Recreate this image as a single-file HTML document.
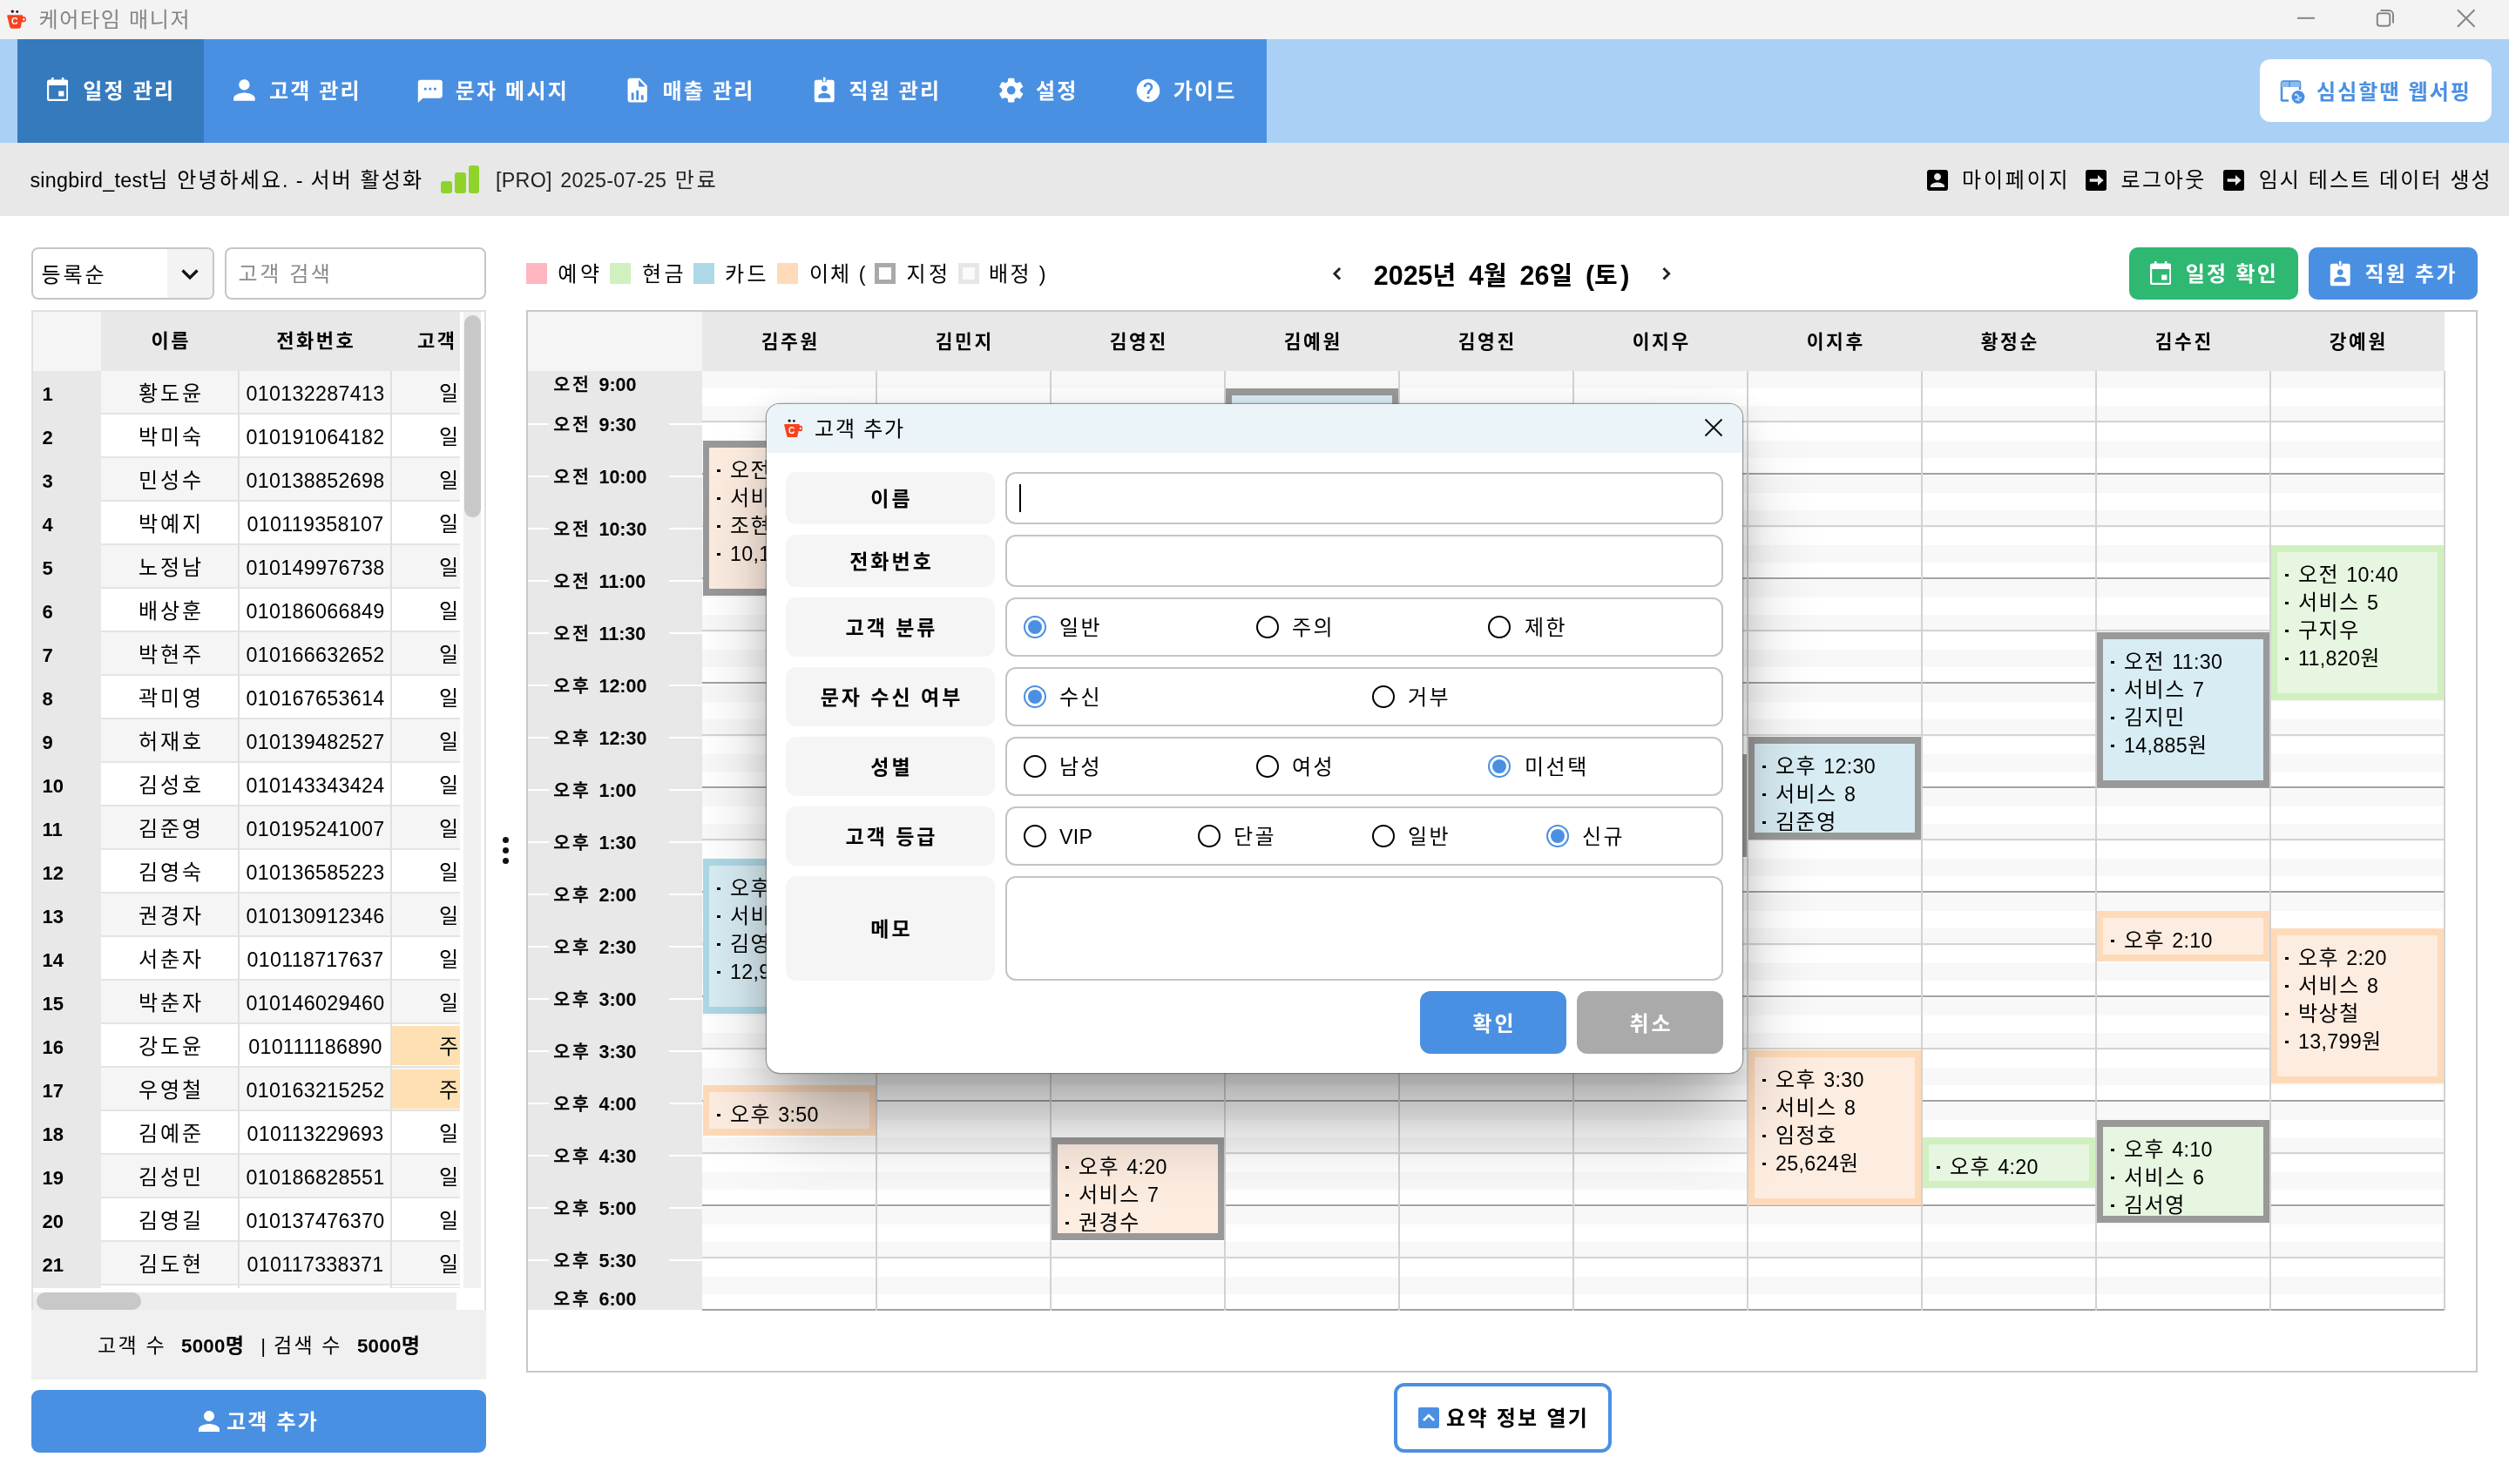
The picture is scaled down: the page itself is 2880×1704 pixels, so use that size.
<!DOCTYPE html>
<html lang="ko"><head><meta charset="utf-8"><title>케어타임 매니저</title>
<style>
html,body{margin:0;padding:0}
body{width:2880px;height:1704px;position:relative;overflow:hidden;background:#fff;font-family:"Liberation Sans","Noto Sans CJK KR","NanumGothic",sans-serif;color:#000}
div{box-sizing:border-box}
.l{font-size:.97em;letter-spacing:.3px}
.lb{font-size:1.05em;letter-spacing:0;font-weight:700;-webkit-text-stroke:0}

.ev{position:absolute;border-style:solid;border-width:8px 7px;font-size:24px;letter-spacing:1.5px;line-height:32px;padding:10px 0 0 9px;white-space:nowrap;overflow:hidden}
.d{display:inline-block;width:3.5px;height:3.5px;background:#000;vertical-align:middle;margin:0 11.5px 2px 0}
.rd{position:absolute;width:26px;height:26px;border-radius:50%;border:2.5px solid #000;background:#fff}
.rd.on{border:2px solid #4a90e2}
.rd.on::after{content:"";position:absolute;left:3px;top:3px;width:16px;height:16px;border-radius:50%;background:#4a90e2}
.lab{position:absolute;left:902px;width:240px;background:#f5f5f5;border-radius:12px;text-align:center;font-weight:700;font-size:23px;letter-spacing:3px;padding-left:3px}
.inp{position:absolute;left:1154px;width:824px;background:#fff;border:2px solid #c4c4c4;border-radius:12px}

</style></head><body><div style="position:absolute;left:0;top:0;width:2880px;height:1704px;will-change:transform">
<div style="position:absolute;left:0px;top:0px;width:2880px;height:45px;background:#f3f3f3;"></div>
<svg style="position:absolute;left:8px;top:11px" width="22" height="22" viewBox="0 0 22 22"><circle cx="6.300" cy="2.100" r="1.700" fill="#111"/><circle cx="11.700" cy="2.400" r="1.400" fill="#111"/><circle cx="18.800" cy="11.300" r="3.300" fill="#f9421e"/><circle cx="19.300" cy="11.200" r="1.200" fill="#f3f3f3"/><path fill="#f9421e" d="M1.200 6.200h16a1 1 0 0 1 1 1.200l-2.300 12.600a2.200 2.200 0 0 1-2.200 1.800h-8.200a2.200 2.200 0 0 1-2.200-1.800l-3.100-12.600a1 1 0 0 1 1-1.200z"/><text x="8.800" y="17.400" font-size="10.500" font-weight="700" fill="#fff" text-anchor="middle" font-family="Liberation Sans,sans-serif" style="letter-spacing:0">C</text></svg>
<div style="position:absolute;left:44.4px;top:0px;height:45px;line-height:45px;font-size:24px;color:#848484;font-weight:400;letter-spacing:1.7px;white-space:nowrap;">케어타임 매니저</div>
<svg style="position:absolute;left:2620px;top:0" width="260" height="45" viewBox="0 0 260 45" fill="none" stroke="#858585" stroke-width="2"><path d="M17 20.800h20"/><rect x="108.800" y="15.300" width="14.500" height="14.500" rx="3"/><path d="M112.500 12h9.500a5 5 0 0 1 5 5v9.500"/><path d="M201 11.300l19.500 19.500M220.500 11.300l-19.500 19.500"/></svg>
<div style="position:absolute;left:0px;top:45px;width:2880px;height:119px;background:#aad0f5;"></div>
<div style="position:absolute;left:20px;top:45px;width:1434px;height:119px;background:#4a90e2;"></div>
<div style="position:absolute;left:20px;top:45px;width:214px;height:119px;background:#357abd;"></div>
<svg style="position:absolute;left:53.6625px;top:88.95416666666667px" width="24.4" height="27" viewBox="0 0 24.4 27"><path fill="#fff" fill-rule="evenodd" d="M5 0h2.600v2.600h9.200V0h2.600v2.600h2.500a2.500 2.500 0 0 1 2.500 2.500v19.400a2.500 2.500 0 0 1-2.500 2.500H2.500A2.500 2.500 0 0 1 0 24.500V5.100a2.500 2.500 0 0 1 2.500-2.500H5zM2.200 9v15.200a.6.600 0 0 0 .6.600h18.800a.6.600 0 0 0 .6-.6V9zM13.200 15.400h6.200v6.200h-6.200z"/></svg>
<div style="position:absolute;left:95.3px;top:45px;height:119px;line-height:119px;font-size:24px;color:#fff;font-weight:700;letter-spacing:2.2px;white-space:nowrap;">일정 관리</div>
<svg style="position:absolute;left:261.6px;top:85.4px" width="36.8" height="36.8" viewBox="0 0 24 24" preserveAspectRatio="none"><path fill="#fff" d="M12 12c2.21 0 4-1.79 4-4s-1.79-4-4-4-4 1.79-4 4 1.79 4 4 4zm0 2c-2.67 0-8 1.34-8 4v2h16v-2c0-2.66-5.33-4-8-4z"/></svg>
<div style="position:absolute;left:308.9px;top:45px;height:119px;line-height:119px;font-size:24px;color:#fff;font-weight:700;letter-spacing:2.2px;white-space:nowrap;">고객 관리</div>
<svg style="position:absolute;left:477.3px;top:89.2px" width="33.6" height="31.6" viewBox="0 0 24 24" preserveAspectRatio="none"><path fill="#fff" d="M20 2H4c-1.1 0-1.99.9-1.99 2L2 22l4-4h14c1.1 0 2-.9 2-2V4c0-1.1-.9-2-2-2zM9 11H7V9h2v2zm4 0h-2V9h2v2zm4 0h-2V9h2v2z"/></svg>
<div style="position:absolute;left:522.7px;top:45px;height:119px;line-height:119px;font-size:24px;color:#fff;font-weight:700;letter-spacing:2.2px;white-space:nowrap;">문자 메시지</div>
<svg style="position:absolute;left:715.2px;top:87px" width="33.4" height="33.4" viewBox="0 0 24 24" preserveAspectRatio="none"><path fill="#fff" d="M13,9H18.5L13,3.5V9M6,2H14L20,8V20A2,2 0 0,1 18,22H6C4.89,22 4,21.1 4,20V4C4,2.89 4.89,2 6,2M7,20H9V14H7V20M11,20H13V12H11V20M15,20H17V16H15V20Z"/></svg>
<div style="position:absolute;left:760.6px;top:45px;height:119px;line-height:119px;font-size:24px;color:#fff;font-weight:700;letter-spacing:2.2px;white-space:nowrap;">매출 관리</div>
<svg style="position:absolute;left:930.8px;top:88.4px" width="30.5" height="30.5" viewBox="0 0 24 24" preserveAspectRatio="none"><path fill="#fff" d="M19,3H14V5H10V3H5A2,2 0 0,0 3,5V21A2,2 0 0,0 5,23H19A2,2 0 0,0 21,21V5A2,2 0 0,0 19,3M12,8A2.7,2.7 0 0,1 14.7,10.7A2.7,2.7 0 0,1 12,13.4A2.7,2.7 0 0,1 9.3,10.7A2.7,2.7 0 0,1 12,8M17.5,19.5H6.5V18C6.5,15.8 10.2,14.8 12,14.8C13.8,14.8 17.5,15.8 17.5,18V19.5M13,4.5H11V0.5H13V4.5Z"/></svg>
<div style="position:absolute;left:974.4px;top:45px;height:119px;line-height:119px;font-size:24px;color:#fff;font-weight:700;letter-spacing:2.2px;white-space:nowrap;">직원 관리</div>
<svg style="position:absolute;left:1143.6px;top:87px" width="33.4" height="33.4" viewBox="0 0 24 24" preserveAspectRatio="none"><path fill="#fff" d="M12,15.5A3.5,3.5 0 0,1 8.5,12A3.5,3.5 0 0,1 12,8.5A3.5,3.5 0 0,1 15.5,12A3.5,3.5 0 0,1 12,15.5M19.43,12.97C19.47,12.65 19.5,12.33 19.5,12C19.5,11.67 19.47,11.34 19.43,11L21.54,9.37C21.73,9.22 21.78,8.95 21.66,8.73L19.66,5.27C19.54,5.05 19.27,4.96 19.05,5.05L16.56,6.05C16.04,5.66 15.5,5.32 14.87,5.07L14.5,2.42C14.46,2.18 14.25,2 14,2H10C9.75,2 9.54,2.18 9.5,2.42L9.13,5.07C8.5,5.32 7.96,5.66 7.44,6.05L4.95,5.05C4.73,4.96 4.46,5.05 4.34,5.27L2.34,8.73C2.21,8.95 2.27,9.22 2.46,9.37L4.57,11C4.53,11.34 4.5,11.67 4.5,12C4.5,12.33 4.53,12.65 4.57,12.97L2.46,14.63C2.27,14.78 2.21,15.05 2.34,15.27L4.34,18.73C4.46,18.95 4.73,19.03 4.95,18.95L7.44,17.94C7.96,18.34 8.5,18.68 9.13,18.93L9.5,21.58C9.54,21.82 9.75,22 10,22H14C14.25,22 14.46,21.82 14.5,21.58L14.87,18.93C15.5,18.67 16.04,18.34 16.56,17.94L19.05,18.95C19.27,19.03 19.54,18.95 19.66,18.73L21.66,15.27C21.78,15.05 21.73,14.78 21.54,14.63L19.43,12.97Z"/></svg>
<div style="position:absolute;left:1189px;top:45px;height:119px;line-height:119px;font-size:24px;color:#fff;font-weight:700;letter-spacing:2.2px;white-space:nowrap;">설정</div>
<svg style="position:absolute;left:1302px;top:87.7px" width="32" height="32" viewBox="0 0 24 24" preserveAspectRatio="none"><path fill="#fff" d="M12 2C6.48 2 2 6.48 2 12s4.48 10 10 10 10-4.48 10-10S17.52 2 12 2zm1 17h-2v-2h2v2zm2.07-7.75l-.9.92C13.45 12.9 13 13.5 13 15h-2v-.5c0-1.1.45-2.1 1.17-2.83l1.24-1.26c.37-.36.59-.86.59-1.41 0-1.1-.9-2-2-2s-2 .9-2 2H8c0-2.21 1.79-4 4-4s4 1.79 4 4c0 .88-.36 1.68-.93 2.25z"/></svg>
<div style="position:absolute;left:1346.8px;top:45px;height:119px;line-height:119px;font-size:24px;color:#fff;font-weight:700;letter-spacing:2.2px;white-space:nowrap;">가이드</div>
<div style="position:absolute;left:2594px;top:68px;width:266px;height:72px;background:#fff;border-radius:12px"></div>
<svg style="position:absolute;left:2616px;top:91px" width="31" height="29" viewBox="0 0 31 29" fill="none"><path d="M3 24.500h8" stroke="#4a90e2" stroke-width="2.500"/><path d="M3 25V4.500a2 2 0 0 1 2-2h17a2 2 0 0 1 2 2V12" stroke="#4a90e2" stroke-width="2.500"/><rect x="3" y="3" width="21" height="6" fill="#8fbaf0"/><path d="M12 3v6" stroke="#4a90e2" stroke-width="1.500"/><circle cx="22" cy="20.500" r="7.500" fill="#4a90e2"/><path d="M18 18.500c2-2 4-.5 4 1.500s2 2.500 3.500.5M19 24c1-1.500 3-1 4 1" stroke="#cfe2f8" stroke-width="1.800"/></svg>
<div style="position:absolute;left:2659px;top:69.5px;height:72px;line-height:72px;font-size:24px;color:#4a90e2;font-weight:700;letter-spacing:2.1px;white-space:nowrap;">심심할땐 웹서핑</div>
<div style="position:absolute;left:0px;top:164px;width:2880px;height:84px;background:#e8e8e8;"></div>
<div style="position:absolute;left:34.4px;top:165px;height:84px;line-height:84px;font-size:24px;color:#000;font-weight:400;letter-spacing:2.1px;white-space:nowrap;"><span class="l">singbird_test</span>님 안녕하세요<span class="l">.</span> <span class="l">-</span> 서버 활성화</div>
<div style="position:absolute;left:506px;top:208px;width:13px;height:14px;background:#8fd32a;border-radius:3px"></div>
<div style="position:absolute;left:522px;top:198px;width:13px;height:24px;background:#8fd32a;border-radius:3px"></div>
<div style="position:absolute;left:538px;top:190px;width:12px;height:32px;background:#8fd32a;border-radius:3px"></div>
<div style="position:absolute;left:569px;top:165px;height:84px;line-height:84px;font-size:24px;color:#222;font-weight:400;letter-spacing:2.8px;white-space:nowrap;"><span class="l">[PRO]</span> <span class="l">2025-07-25</span> 만료</div>
<svg style="position:absolute;left:2208px;top:190.5px" width="32" height="32" viewBox="0 0 24 24" ><path fill="#000" d="M3 5v14c0 1.1.89 2 2 2h14c1.1 0 2-.9 2-2V5c0-1.1-.9-2-2-2H5c-1.11 0-2 .9-2 2zm12 4c0 1.66-1.34 3-3 3s-3-1.34-3-3 1.34-3 3-3 3 1.34 3 3zm-9 8c0-2 4-3.1 6-3.1s6 1.1 6 3.1v1H6v-1z"/></svg>
<div style="position:absolute;left:2252px;top:165px;height:84px;line-height:84px;font-size:24px;color:#000;font-weight:400;letter-spacing:2.8px;white-space:nowrap;">마이페이지</div>
<svg style="position:absolute;left:2390px;top:190.5px" width="32" height="32" viewBox="0 0 24 24" ><path fill="#000" d="M5,21A2,2 0 0,1 3,19V5A2,2 0 0,1 5,3H19A2,2 0 0,1 21,5V19A2,2 0 0,1 19,21H5M6.5,13.4H13.5V16.5L18.5,12L13.5,7.5V10.6H6.5V13.4Z"/></svg>
<div style="position:absolute;left:2434.5px;top:165px;height:84px;line-height:84px;font-size:24px;color:#000;font-weight:400;letter-spacing:2.5px;white-space:nowrap;">로그아웃</div>
<svg style="position:absolute;left:2548px;top:190.5px" width="32" height="32" viewBox="0 0 24 24" ><path fill="#000" d="M5,21A2,2 0 0,1 3,19V5A2,2 0 0,1 5,3H19A2,2 0 0,1 21,5V19A2,2 0 0,1 19,21H5M6.5,13.4H13.5V16.5L18.5,12L13.5,7.5V10.6H6.5V13.4Z"/></svg>
<div style="position:absolute;left:2592.7px;top:165px;height:84px;line-height:84px;font-size:24px;color:#000;font-weight:400;letter-spacing:2.1px;white-space:nowrap;">임시 테스트 데이터 생성</div>
<div style="position:absolute;left:36px;top:284px;width:210px;height:60px;background:#fff;border:2px solid #c6c6c6;border-radius:8px;overflow:hidden"></div>
<div style="position:absolute;left:192px;top:286px;width:52px;height:56px;background:#f3f3f3;border-radius:0 6px 6px 0"></div>
<div style="position:absolute;left:47.5px;top:286px;height:60px;line-height:60px;font-size:24px;color:#000;font-weight:400;letter-spacing:2.9px;white-space:nowrap;">등록순</div>
<svg style="position:absolute;left:207px;top:306px" width="22" height="18" viewBox="0 0 22 18" fill="none" stroke="#111" stroke-width="3.200"><path d="M2.500 4.500l8.500 8.500 8.500-8.500"/></svg>
<div style="position:absolute;left:258px;top:284px;width:300px;height:60px;background:#fff;border:2px solid #c6c6c6;border-radius:8px"></div>
<div style="position:absolute;left:273.5px;top:285px;height:60px;line-height:60px;font-size:24px;color:#8a8a8a;font-weight:400;letter-spacing:2.6px;white-space:nowrap;">고객 검색</div>
<div style="position:absolute;left:36px;top:356px;width:522px;height:1150px;background:#fff;border:2px solid #e0e0e0"></div>
<div style="position:absolute;left:38px;top:358px;width:78px;height:68px;background:#f5f5f5;"></div>
<div style="position:absolute;left:116px;top:358px;width:412px;height:68px;background:#e8e8e8;"></div>
<div style="position:absolute;left:116px;top:358px;width:158px;height:68px;line-height:68px;font-size:22px;color:#000;font-weight:700;letter-spacing:2.5px;padding-left:2.5px;white-space:nowrap;text-align:center;">이름</div>
<div style="position:absolute;left:274px;top:358px;width:175px;height:68px;line-height:68px;font-size:22px;color:#000;font-weight:700;letter-spacing:2.5px;padding-left:2.5px;white-space:nowrap;text-align:center;">전화번호</div>
<div style="position:absolute;left:449px;top:358px;width:79px;height:68px;overflow:hidden"><div style="position:absolute;left:0px;top:0px;width:157px;height:68px;line-height:68px;font-size:22px;color:#000;font-weight:700;letter-spacing:2.5px;padding-left:2.5px;white-space:nowrap;text-align:center;">고객 분류</div></div>
<div style="position:absolute;left:38px;top:426px;width:490px;height:1053px;overflow:hidden">
<div style="position:absolute;left:0px;top:0px;width:78px;height:1053px;background:#e8e8e8;"></div>
<div style="position:absolute;left:78px;top:0px;width:412px;height:50px;background:#f5f5f5;border-bottom:2px solid #e4e4e4"></div>
<div style="position:absolute;left:235px;top:0px;width:2px;height:50px;background:#e0e0e0;"></div>
<div style="position:absolute;left:410px;top:0px;width:2px;height:50px;background:#e0e0e0;"></div>
<div style="position:absolute;left:10.5px;top:2px;height:50px;line-height:50px;font-size:21px;color:#000;font-weight:700;letter-spacing:0px;white-space:nowrap;"><span class="lb">1</span></div>
<div style="position:absolute;left:78px;top:1px;width:158px;height:50px;line-height:50px;font-size:24px;color:#000;font-weight:400;letter-spacing:2.9px;padding-left:2.9px;white-space:nowrap;text-align:center;">황도윤</div>
<div style="position:absolute;left:237px;top:1px;width:174px;height:50px;line-height:50px;font-size:24px;color:#000;font-weight:400;letter-spacing:0px;padding-left:0px;white-space:nowrap;text-align:center;"><span class="l">010132287413</span></div>
<div style="position:absolute;left:412px;top:1px;width:78px;height:50px;overflow:hidden"><div style="position:absolute;left:0px;top:0px;width:155px;height:50px;line-height:50px;font-size:24px;color:#000;font-weight:400;letter-spacing:2.9px;padding-left:2.9px;white-space:nowrap;text-align:center;">일반</div></div>
<div style="position:absolute;left:78px;top:50px;width:412px;height:50px;background:#fff;border-bottom:2px solid #e4e4e4"></div>
<div style="position:absolute;left:235px;top:50px;width:2px;height:50px;background:#e0e0e0;"></div>
<div style="position:absolute;left:410px;top:50px;width:2px;height:50px;background:#e0e0e0;"></div>
<div style="position:absolute;left:10.5px;top:52px;height:50px;line-height:50px;font-size:21px;color:#000;font-weight:700;letter-spacing:0px;white-space:nowrap;"><span class="lb">2</span></div>
<div style="position:absolute;left:78px;top:51px;width:158px;height:50px;line-height:50px;font-size:24px;color:#000;font-weight:400;letter-spacing:2.9px;padding-left:2.9px;white-space:nowrap;text-align:center;">박미숙</div>
<div style="position:absolute;left:237px;top:51px;width:174px;height:50px;line-height:50px;font-size:24px;color:#000;font-weight:400;letter-spacing:0px;padding-left:0px;white-space:nowrap;text-align:center;"><span class="l">010191064182</span></div>
<div style="position:absolute;left:412px;top:51px;width:78px;height:50px;overflow:hidden"><div style="position:absolute;left:0px;top:0px;width:155px;height:50px;line-height:50px;font-size:24px;color:#000;font-weight:400;letter-spacing:2.9px;padding-left:2.9px;white-space:nowrap;text-align:center;">일반</div></div>
<div style="position:absolute;left:78px;top:100px;width:412px;height:50px;background:#f5f5f5;border-bottom:2px solid #e4e4e4"></div>
<div style="position:absolute;left:235px;top:100px;width:2px;height:50px;background:#e0e0e0;"></div>
<div style="position:absolute;left:410px;top:100px;width:2px;height:50px;background:#e0e0e0;"></div>
<div style="position:absolute;left:10.5px;top:102px;height:50px;line-height:50px;font-size:21px;color:#000;font-weight:700;letter-spacing:0px;white-space:nowrap;"><span class="lb">3</span></div>
<div style="position:absolute;left:78px;top:101px;width:158px;height:50px;line-height:50px;font-size:24px;color:#000;font-weight:400;letter-spacing:2.9px;padding-left:2.9px;white-space:nowrap;text-align:center;">민성수</div>
<div style="position:absolute;left:237px;top:101px;width:174px;height:50px;line-height:50px;font-size:24px;color:#000;font-weight:400;letter-spacing:0px;padding-left:0px;white-space:nowrap;text-align:center;"><span class="l">010138852698</span></div>
<div style="position:absolute;left:412px;top:101px;width:78px;height:50px;overflow:hidden"><div style="position:absolute;left:0px;top:0px;width:155px;height:50px;line-height:50px;font-size:24px;color:#000;font-weight:400;letter-spacing:2.9px;padding-left:2.9px;white-space:nowrap;text-align:center;">일반</div></div>
<div style="position:absolute;left:78px;top:150px;width:412px;height:50px;background:#fff;border-bottom:2px solid #e4e4e4"></div>
<div style="position:absolute;left:235px;top:150px;width:2px;height:50px;background:#e0e0e0;"></div>
<div style="position:absolute;left:410px;top:150px;width:2px;height:50px;background:#e0e0e0;"></div>
<div style="position:absolute;left:10.5px;top:152px;height:50px;line-height:50px;font-size:21px;color:#000;font-weight:700;letter-spacing:0px;white-space:nowrap;"><span class="lb">4</span></div>
<div style="position:absolute;left:78px;top:151px;width:158px;height:50px;line-height:50px;font-size:24px;color:#000;font-weight:400;letter-spacing:2.9px;padding-left:2.9px;white-space:nowrap;text-align:center;">박예지</div>
<div style="position:absolute;left:237px;top:151px;width:174px;height:50px;line-height:50px;font-size:24px;color:#000;font-weight:400;letter-spacing:0px;padding-left:0px;white-space:nowrap;text-align:center;"><span class="l">010119358107</span></div>
<div style="position:absolute;left:412px;top:151px;width:78px;height:50px;overflow:hidden"><div style="position:absolute;left:0px;top:0px;width:155px;height:50px;line-height:50px;font-size:24px;color:#000;font-weight:400;letter-spacing:2.9px;padding-left:2.9px;white-space:nowrap;text-align:center;">일반</div></div>
<div style="position:absolute;left:78px;top:200px;width:412px;height:50px;background:#f5f5f5;border-bottom:2px solid #e4e4e4"></div>
<div style="position:absolute;left:235px;top:200px;width:2px;height:50px;background:#e0e0e0;"></div>
<div style="position:absolute;left:410px;top:200px;width:2px;height:50px;background:#e0e0e0;"></div>
<div style="position:absolute;left:10.5px;top:202px;height:50px;line-height:50px;font-size:21px;color:#000;font-weight:700;letter-spacing:0px;white-space:nowrap;"><span class="lb">5</span></div>
<div style="position:absolute;left:78px;top:201px;width:158px;height:50px;line-height:50px;font-size:24px;color:#000;font-weight:400;letter-spacing:2.9px;padding-left:2.9px;white-space:nowrap;text-align:center;">노정남</div>
<div style="position:absolute;left:237px;top:201px;width:174px;height:50px;line-height:50px;font-size:24px;color:#000;font-weight:400;letter-spacing:0px;padding-left:0px;white-space:nowrap;text-align:center;"><span class="l">010149976738</span></div>
<div style="position:absolute;left:412px;top:201px;width:78px;height:50px;overflow:hidden"><div style="position:absolute;left:0px;top:0px;width:155px;height:50px;line-height:50px;font-size:24px;color:#000;font-weight:400;letter-spacing:2.9px;padding-left:2.9px;white-space:nowrap;text-align:center;">일반</div></div>
<div style="position:absolute;left:78px;top:250px;width:412px;height:50px;background:#fff;border-bottom:2px solid #e4e4e4"></div>
<div style="position:absolute;left:235px;top:250px;width:2px;height:50px;background:#e0e0e0;"></div>
<div style="position:absolute;left:410px;top:250px;width:2px;height:50px;background:#e0e0e0;"></div>
<div style="position:absolute;left:10.5px;top:252px;height:50px;line-height:50px;font-size:21px;color:#000;font-weight:700;letter-spacing:0px;white-space:nowrap;"><span class="lb">6</span></div>
<div style="position:absolute;left:78px;top:251px;width:158px;height:50px;line-height:50px;font-size:24px;color:#000;font-weight:400;letter-spacing:2.9px;padding-left:2.9px;white-space:nowrap;text-align:center;">배상훈</div>
<div style="position:absolute;left:237px;top:251px;width:174px;height:50px;line-height:50px;font-size:24px;color:#000;font-weight:400;letter-spacing:0px;padding-left:0px;white-space:nowrap;text-align:center;"><span class="l">010186066849</span></div>
<div style="position:absolute;left:412px;top:251px;width:78px;height:50px;overflow:hidden"><div style="position:absolute;left:0px;top:0px;width:155px;height:50px;line-height:50px;font-size:24px;color:#000;font-weight:400;letter-spacing:2.9px;padding-left:2.9px;white-space:nowrap;text-align:center;">일반</div></div>
<div style="position:absolute;left:78px;top:300px;width:412px;height:50px;background:#f5f5f5;border-bottom:2px solid #e4e4e4"></div>
<div style="position:absolute;left:235px;top:300px;width:2px;height:50px;background:#e0e0e0;"></div>
<div style="position:absolute;left:410px;top:300px;width:2px;height:50px;background:#e0e0e0;"></div>
<div style="position:absolute;left:10.5px;top:302px;height:50px;line-height:50px;font-size:21px;color:#000;font-weight:700;letter-spacing:0px;white-space:nowrap;"><span class="lb">7</span></div>
<div style="position:absolute;left:78px;top:301px;width:158px;height:50px;line-height:50px;font-size:24px;color:#000;font-weight:400;letter-spacing:2.9px;padding-left:2.9px;white-space:nowrap;text-align:center;">박현주</div>
<div style="position:absolute;left:237px;top:301px;width:174px;height:50px;line-height:50px;font-size:24px;color:#000;font-weight:400;letter-spacing:0px;padding-left:0px;white-space:nowrap;text-align:center;"><span class="l">010166632652</span></div>
<div style="position:absolute;left:412px;top:301px;width:78px;height:50px;overflow:hidden"><div style="position:absolute;left:0px;top:0px;width:155px;height:50px;line-height:50px;font-size:24px;color:#000;font-weight:400;letter-spacing:2.9px;padding-left:2.9px;white-space:nowrap;text-align:center;">일반</div></div>
<div style="position:absolute;left:78px;top:350px;width:412px;height:50px;background:#fff;border-bottom:2px solid #e4e4e4"></div>
<div style="position:absolute;left:235px;top:350px;width:2px;height:50px;background:#e0e0e0;"></div>
<div style="position:absolute;left:410px;top:350px;width:2px;height:50px;background:#e0e0e0;"></div>
<div style="position:absolute;left:10.5px;top:352px;height:50px;line-height:50px;font-size:21px;color:#000;font-weight:700;letter-spacing:0px;white-space:nowrap;"><span class="lb">8</span></div>
<div style="position:absolute;left:78px;top:351px;width:158px;height:50px;line-height:50px;font-size:24px;color:#000;font-weight:400;letter-spacing:2.9px;padding-left:2.9px;white-space:nowrap;text-align:center;">곽미영</div>
<div style="position:absolute;left:237px;top:351px;width:174px;height:50px;line-height:50px;font-size:24px;color:#000;font-weight:400;letter-spacing:0px;padding-left:0px;white-space:nowrap;text-align:center;"><span class="l">010167653614</span></div>
<div style="position:absolute;left:412px;top:351px;width:78px;height:50px;overflow:hidden"><div style="position:absolute;left:0px;top:0px;width:155px;height:50px;line-height:50px;font-size:24px;color:#000;font-weight:400;letter-spacing:2.9px;padding-left:2.9px;white-space:nowrap;text-align:center;">일반</div></div>
<div style="position:absolute;left:78px;top:400px;width:412px;height:50px;background:#f5f5f5;border-bottom:2px solid #e4e4e4"></div>
<div style="position:absolute;left:235px;top:400px;width:2px;height:50px;background:#e0e0e0;"></div>
<div style="position:absolute;left:410px;top:400px;width:2px;height:50px;background:#e0e0e0;"></div>
<div style="position:absolute;left:10.5px;top:402px;height:50px;line-height:50px;font-size:21px;color:#000;font-weight:700;letter-spacing:0px;white-space:nowrap;"><span class="lb">9</span></div>
<div style="position:absolute;left:78px;top:401px;width:158px;height:50px;line-height:50px;font-size:24px;color:#000;font-weight:400;letter-spacing:2.9px;padding-left:2.9px;white-space:nowrap;text-align:center;">허재호</div>
<div style="position:absolute;left:237px;top:401px;width:174px;height:50px;line-height:50px;font-size:24px;color:#000;font-weight:400;letter-spacing:0px;padding-left:0px;white-space:nowrap;text-align:center;"><span class="l">010139482527</span></div>
<div style="position:absolute;left:412px;top:401px;width:78px;height:50px;overflow:hidden"><div style="position:absolute;left:0px;top:0px;width:155px;height:50px;line-height:50px;font-size:24px;color:#000;font-weight:400;letter-spacing:2.9px;padding-left:2.9px;white-space:nowrap;text-align:center;">일반</div></div>
<div style="position:absolute;left:78px;top:450px;width:412px;height:50px;background:#fff;border-bottom:2px solid #e4e4e4"></div>
<div style="position:absolute;left:235px;top:450px;width:2px;height:50px;background:#e0e0e0;"></div>
<div style="position:absolute;left:410px;top:450px;width:2px;height:50px;background:#e0e0e0;"></div>
<div style="position:absolute;left:10.5px;top:452px;height:50px;line-height:50px;font-size:21px;color:#000;font-weight:700;letter-spacing:0px;white-space:nowrap;"><span class="lb">10</span></div>
<div style="position:absolute;left:78px;top:451px;width:158px;height:50px;line-height:50px;font-size:24px;color:#000;font-weight:400;letter-spacing:2.9px;padding-left:2.9px;white-space:nowrap;text-align:center;">김성호</div>
<div style="position:absolute;left:237px;top:451px;width:174px;height:50px;line-height:50px;font-size:24px;color:#000;font-weight:400;letter-spacing:0px;padding-left:0px;white-space:nowrap;text-align:center;"><span class="l">010143343424</span></div>
<div style="position:absolute;left:412px;top:451px;width:78px;height:50px;overflow:hidden"><div style="position:absolute;left:0px;top:0px;width:155px;height:50px;line-height:50px;font-size:24px;color:#000;font-weight:400;letter-spacing:2.9px;padding-left:2.9px;white-space:nowrap;text-align:center;">일반</div></div>
<div style="position:absolute;left:78px;top:500px;width:412px;height:50px;background:#f5f5f5;border-bottom:2px solid #e4e4e4"></div>
<div style="position:absolute;left:235px;top:500px;width:2px;height:50px;background:#e0e0e0;"></div>
<div style="position:absolute;left:410px;top:500px;width:2px;height:50px;background:#e0e0e0;"></div>
<div style="position:absolute;left:10.5px;top:502px;height:50px;line-height:50px;font-size:21px;color:#000;font-weight:700;letter-spacing:0px;white-space:nowrap;"><span class="lb">11</span></div>
<div style="position:absolute;left:78px;top:501px;width:158px;height:50px;line-height:50px;font-size:24px;color:#000;font-weight:400;letter-spacing:2.9px;padding-left:2.9px;white-space:nowrap;text-align:center;">김준영</div>
<div style="position:absolute;left:237px;top:501px;width:174px;height:50px;line-height:50px;font-size:24px;color:#000;font-weight:400;letter-spacing:0px;padding-left:0px;white-space:nowrap;text-align:center;"><span class="l">010195241007</span></div>
<div style="position:absolute;left:412px;top:501px;width:78px;height:50px;overflow:hidden"><div style="position:absolute;left:0px;top:0px;width:155px;height:50px;line-height:50px;font-size:24px;color:#000;font-weight:400;letter-spacing:2.9px;padding-left:2.9px;white-space:nowrap;text-align:center;">일반</div></div>
<div style="position:absolute;left:78px;top:550px;width:412px;height:50px;background:#fff;border-bottom:2px solid #e4e4e4"></div>
<div style="position:absolute;left:235px;top:550px;width:2px;height:50px;background:#e0e0e0;"></div>
<div style="position:absolute;left:410px;top:550px;width:2px;height:50px;background:#e0e0e0;"></div>
<div style="position:absolute;left:10.5px;top:552px;height:50px;line-height:50px;font-size:21px;color:#000;font-weight:700;letter-spacing:0px;white-space:nowrap;"><span class="lb">12</span></div>
<div style="position:absolute;left:78px;top:551px;width:158px;height:50px;line-height:50px;font-size:24px;color:#000;font-weight:400;letter-spacing:2.9px;padding-left:2.9px;white-space:nowrap;text-align:center;">김영숙</div>
<div style="position:absolute;left:237px;top:551px;width:174px;height:50px;line-height:50px;font-size:24px;color:#000;font-weight:400;letter-spacing:0px;padding-left:0px;white-space:nowrap;text-align:center;"><span class="l">010136585223</span></div>
<div style="position:absolute;left:412px;top:551px;width:78px;height:50px;overflow:hidden"><div style="position:absolute;left:0px;top:0px;width:155px;height:50px;line-height:50px;font-size:24px;color:#000;font-weight:400;letter-spacing:2.9px;padding-left:2.9px;white-space:nowrap;text-align:center;">일반</div></div>
<div style="position:absolute;left:78px;top:600px;width:412px;height:50px;background:#f5f5f5;border-bottom:2px solid #e4e4e4"></div>
<div style="position:absolute;left:235px;top:600px;width:2px;height:50px;background:#e0e0e0;"></div>
<div style="position:absolute;left:410px;top:600px;width:2px;height:50px;background:#e0e0e0;"></div>
<div style="position:absolute;left:10.5px;top:602px;height:50px;line-height:50px;font-size:21px;color:#000;font-weight:700;letter-spacing:0px;white-space:nowrap;"><span class="lb">13</span></div>
<div style="position:absolute;left:78px;top:601px;width:158px;height:50px;line-height:50px;font-size:24px;color:#000;font-weight:400;letter-spacing:2.9px;padding-left:2.9px;white-space:nowrap;text-align:center;">권경자</div>
<div style="position:absolute;left:237px;top:601px;width:174px;height:50px;line-height:50px;font-size:24px;color:#000;font-weight:400;letter-spacing:0px;padding-left:0px;white-space:nowrap;text-align:center;"><span class="l">010130912346</span></div>
<div style="position:absolute;left:412px;top:601px;width:78px;height:50px;overflow:hidden"><div style="position:absolute;left:0px;top:0px;width:155px;height:50px;line-height:50px;font-size:24px;color:#000;font-weight:400;letter-spacing:2.9px;padding-left:2.9px;white-space:nowrap;text-align:center;">일반</div></div>
<div style="position:absolute;left:78px;top:650px;width:412px;height:50px;background:#fff;border-bottom:2px solid #e4e4e4"></div>
<div style="position:absolute;left:235px;top:650px;width:2px;height:50px;background:#e0e0e0;"></div>
<div style="position:absolute;left:410px;top:650px;width:2px;height:50px;background:#e0e0e0;"></div>
<div style="position:absolute;left:10.5px;top:652px;height:50px;line-height:50px;font-size:21px;color:#000;font-weight:700;letter-spacing:0px;white-space:nowrap;"><span class="lb">14</span></div>
<div style="position:absolute;left:78px;top:651px;width:158px;height:50px;line-height:50px;font-size:24px;color:#000;font-weight:400;letter-spacing:2.9px;padding-left:2.9px;white-space:nowrap;text-align:center;">서춘자</div>
<div style="position:absolute;left:237px;top:651px;width:174px;height:50px;line-height:50px;font-size:24px;color:#000;font-weight:400;letter-spacing:0px;padding-left:0px;white-space:nowrap;text-align:center;"><span class="l">010118717637</span></div>
<div style="position:absolute;left:412px;top:651px;width:78px;height:50px;overflow:hidden"><div style="position:absolute;left:0px;top:0px;width:155px;height:50px;line-height:50px;font-size:24px;color:#000;font-weight:400;letter-spacing:2.9px;padding-left:2.9px;white-space:nowrap;text-align:center;">일반</div></div>
<div style="position:absolute;left:78px;top:700px;width:412px;height:50px;background:#f5f5f5;border-bottom:2px solid #e4e4e4"></div>
<div style="position:absolute;left:235px;top:700px;width:2px;height:50px;background:#e0e0e0;"></div>
<div style="position:absolute;left:410px;top:700px;width:2px;height:50px;background:#e0e0e0;"></div>
<div style="position:absolute;left:10.5px;top:702px;height:50px;line-height:50px;font-size:21px;color:#000;font-weight:700;letter-spacing:0px;white-space:nowrap;"><span class="lb">15</span></div>
<div style="position:absolute;left:78px;top:701px;width:158px;height:50px;line-height:50px;font-size:24px;color:#000;font-weight:400;letter-spacing:2.9px;padding-left:2.9px;white-space:nowrap;text-align:center;">박춘자</div>
<div style="position:absolute;left:237px;top:701px;width:174px;height:50px;line-height:50px;font-size:24px;color:#000;font-weight:400;letter-spacing:0px;padding-left:0px;white-space:nowrap;text-align:center;"><span class="l">010146029460</span></div>
<div style="position:absolute;left:412px;top:701px;width:78px;height:50px;overflow:hidden"><div style="position:absolute;left:0px;top:0px;width:155px;height:50px;line-height:50px;font-size:24px;color:#000;font-weight:400;letter-spacing:2.9px;padding-left:2.9px;white-space:nowrap;text-align:center;">일반</div></div>
<div style="position:absolute;left:78px;top:750px;width:412px;height:50px;background:#fff;border-bottom:2px solid #e4e4e4"></div>
<div style="position:absolute;left:412px;top:752px;width:78px;height:45px;background:#ffe0b2;"></div>
<div style="position:absolute;left:235px;top:750px;width:2px;height:50px;background:#e0e0e0;"></div>
<div style="position:absolute;left:410px;top:750px;width:2px;height:50px;background:#e0e0e0;"></div>
<div style="position:absolute;left:10.5px;top:752px;height:50px;line-height:50px;font-size:21px;color:#000;font-weight:700;letter-spacing:0px;white-space:nowrap;"><span class="lb">16</span></div>
<div style="position:absolute;left:78px;top:751px;width:158px;height:50px;line-height:50px;font-size:24px;color:#000;font-weight:400;letter-spacing:2.9px;padding-left:2.9px;white-space:nowrap;text-align:center;">강도윤</div>
<div style="position:absolute;left:237px;top:751px;width:174px;height:50px;line-height:50px;font-size:24px;color:#000;font-weight:400;letter-spacing:0px;padding-left:0px;white-space:nowrap;text-align:center;"><span class="l">010111186890</span></div>
<div style="position:absolute;left:412px;top:751px;width:78px;height:50px;overflow:hidden"><div style="position:absolute;left:0px;top:0px;width:155px;height:50px;line-height:50px;font-size:24px;color:#000;font-weight:400;letter-spacing:2.9px;padding-left:2.9px;white-space:nowrap;text-align:center;">주의</div></div>
<div style="position:absolute;left:78px;top:800px;width:412px;height:50px;background:#f5f5f5;border-bottom:2px solid #e4e4e4"></div>
<div style="position:absolute;left:412px;top:802px;width:78px;height:45px;background:#ffe0b2;"></div>
<div style="position:absolute;left:235px;top:800px;width:2px;height:50px;background:#e0e0e0;"></div>
<div style="position:absolute;left:410px;top:800px;width:2px;height:50px;background:#e0e0e0;"></div>
<div style="position:absolute;left:10.5px;top:802px;height:50px;line-height:50px;font-size:21px;color:#000;font-weight:700;letter-spacing:0px;white-space:nowrap;"><span class="lb">17</span></div>
<div style="position:absolute;left:78px;top:801px;width:158px;height:50px;line-height:50px;font-size:24px;color:#000;font-weight:400;letter-spacing:2.9px;padding-left:2.9px;white-space:nowrap;text-align:center;">우영철</div>
<div style="position:absolute;left:237px;top:801px;width:174px;height:50px;line-height:50px;font-size:24px;color:#000;font-weight:400;letter-spacing:0px;padding-left:0px;white-space:nowrap;text-align:center;"><span class="l">010163215252</span></div>
<div style="position:absolute;left:412px;top:801px;width:78px;height:50px;overflow:hidden"><div style="position:absolute;left:0px;top:0px;width:155px;height:50px;line-height:50px;font-size:24px;color:#000;font-weight:400;letter-spacing:2.9px;padding-left:2.9px;white-space:nowrap;text-align:center;">주의</div></div>
<div style="position:absolute;left:78px;top:850px;width:412px;height:50px;background:#fff;border-bottom:2px solid #e4e4e4"></div>
<div style="position:absolute;left:235px;top:850px;width:2px;height:50px;background:#e0e0e0;"></div>
<div style="position:absolute;left:410px;top:850px;width:2px;height:50px;background:#e0e0e0;"></div>
<div style="position:absolute;left:10.5px;top:852px;height:50px;line-height:50px;font-size:21px;color:#000;font-weight:700;letter-spacing:0px;white-space:nowrap;"><span class="lb">18</span></div>
<div style="position:absolute;left:78px;top:851px;width:158px;height:50px;line-height:50px;font-size:24px;color:#000;font-weight:400;letter-spacing:2.9px;padding-left:2.9px;white-space:nowrap;text-align:center;">김예준</div>
<div style="position:absolute;left:237px;top:851px;width:174px;height:50px;line-height:50px;font-size:24px;color:#000;font-weight:400;letter-spacing:0px;padding-left:0px;white-space:nowrap;text-align:center;"><span class="l">010113229693</span></div>
<div style="position:absolute;left:412px;top:851px;width:78px;height:50px;overflow:hidden"><div style="position:absolute;left:0px;top:0px;width:155px;height:50px;line-height:50px;font-size:24px;color:#000;font-weight:400;letter-spacing:2.9px;padding-left:2.9px;white-space:nowrap;text-align:center;">일반</div></div>
<div style="position:absolute;left:78px;top:900px;width:412px;height:50px;background:#f5f5f5;border-bottom:2px solid #e4e4e4"></div>
<div style="position:absolute;left:235px;top:900px;width:2px;height:50px;background:#e0e0e0;"></div>
<div style="position:absolute;left:410px;top:900px;width:2px;height:50px;background:#e0e0e0;"></div>
<div style="position:absolute;left:10.5px;top:902px;height:50px;line-height:50px;font-size:21px;color:#000;font-weight:700;letter-spacing:0px;white-space:nowrap;"><span class="lb">19</span></div>
<div style="position:absolute;left:78px;top:901px;width:158px;height:50px;line-height:50px;font-size:24px;color:#000;font-weight:400;letter-spacing:2.9px;padding-left:2.9px;white-space:nowrap;text-align:center;">김성민</div>
<div style="position:absolute;left:237px;top:901px;width:174px;height:50px;line-height:50px;font-size:24px;color:#000;font-weight:400;letter-spacing:0px;padding-left:0px;white-space:nowrap;text-align:center;"><span class="l">010186828551</span></div>
<div style="position:absolute;left:412px;top:901px;width:78px;height:50px;overflow:hidden"><div style="position:absolute;left:0px;top:0px;width:155px;height:50px;line-height:50px;font-size:24px;color:#000;font-weight:400;letter-spacing:2.9px;padding-left:2.9px;white-space:nowrap;text-align:center;">일반</div></div>
<div style="position:absolute;left:78px;top:950px;width:412px;height:50px;background:#fff;border-bottom:2px solid #e4e4e4"></div>
<div style="position:absolute;left:235px;top:950px;width:2px;height:50px;background:#e0e0e0;"></div>
<div style="position:absolute;left:410px;top:950px;width:2px;height:50px;background:#e0e0e0;"></div>
<div style="position:absolute;left:10.5px;top:952px;height:50px;line-height:50px;font-size:21px;color:#000;font-weight:700;letter-spacing:0px;white-space:nowrap;"><span class="lb">20</span></div>
<div style="position:absolute;left:78px;top:951px;width:158px;height:50px;line-height:50px;font-size:24px;color:#000;font-weight:400;letter-spacing:2.9px;padding-left:2.9px;white-space:nowrap;text-align:center;">김영길</div>
<div style="position:absolute;left:237px;top:951px;width:174px;height:50px;line-height:50px;font-size:24px;color:#000;font-weight:400;letter-spacing:0px;padding-left:0px;white-space:nowrap;text-align:center;"><span class="l">010137476370</span></div>
<div style="position:absolute;left:412px;top:951px;width:78px;height:50px;overflow:hidden"><div style="position:absolute;left:0px;top:0px;width:155px;height:50px;line-height:50px;font-size:24px;color:#000;font-weight:400;letter-spacing:2.9px;padding-left:2.9px;white-space:nowrap;text-align:center;">일반</div></div>
<div style="position:absolute;left:78px;top:1000px;width:412px;height:50px;background:#f5f5f5;border-bottom:2px solid #e4e4e4"></div>
<div style="position:absolute;left:235px;top:1000px;width:2px;height:50px;background:#e0e0e0;"></div>
<div style="position:absolute;left:410px;top:1000px;width:2px;height:50px;background:#e0e0e0;"></div>
<div style="position:absolute;left:10.5px;top:1002px;height:50px;line-height:50px;font-size:21px;color:#000;font-weight:700;letter-spacing:0px;white-space:nowrap;"><span class="lb">21</span></div>
<div style="position:absolute;left:78px;top:1001px;width:158px;height:50px;line-height:50px;font-size:24px;color:#000;font-weight:400;letter-spacing:2.9px;padding-left:2.9px;white-space:nowrap;text-align:center;">김도현</div>
<div style="position:absolute;left:237px;top:1001px;width:174px;height:50px;line-height:50px;font-size:24px;color:#000;font-weight:400;letter-spacing:0px;padding-left:0px;white-space:nowrap;text-align:center;"><span class="l">010117338371</span></div>
<div style="position:absolute;left:412px;top:1001px;width:78px;height:50px;overflow:hidden"><div style="position:absolute;left:0px;top:0px;width:155px;height:50px;line-height:50px;font-size:24px;color:#000;font-weight:400;letter-spacing:2.9px;padding-left:2.9px;white-space:nowrap;text-align:center;">일반</div></div>
<div style="position:absolute;left:78px;top:1050px;width:412px;height:50px;background:#fff;border-bottom:2px solid #e4e4e4"></div>
<div style="position:absolute;left:412px;top:1052px;width:78px;height:45px;background:#ffe0b2;"></div>
<div style="position:absolute;left:235px;top:1050px;width:2px;height:50px;background:#e0e0e0;"></div>
<div style="position:absolute;left:410px;top:1050px;width:2px;height:50px;background:#e0e0e0;"></div>
<div style="position:absolute;left:10.5px;top:1052px;height:50px;line-height:50px;font-size:21px;color:#000;font-weight:700;letter-spacing:0px;white-space:nowrap;"><span class="lb">22</span></div>
<div style="position:absolute;left:78px;top:1051px;width:158px;height:50px;line-height:50px;font-size:24px;color:#000;font-weight:400;letter-spacing:2.9px;padding-left:2.9px;white-space:nowrap;text-align:center;">이정훈</div>
<div style="position:absolute;left:237px;top:1051px;width:174px;height:50px;line-height:50px;font-size:24px;color:#000;font-weight:400;letter-spacing:0px;padding-left:0px;white-space:nowrap;text-align:center;"><span class="l">010122334455</span></div>
<div style="position:absolute;left:412px;top:1051px;width:78px;height:50px;overflow:hidden"><div style="position:absolute;left:0px;top:0px;width:155px;height:50px;line-height:50px;font-size:24px;color:#000;font-weight:400;letter-spacing:2.9px;padding-left:2.9px;white-space:nowrap;text-align:center;">주의</div></div>
</div>
<div style="position:absolute;left:532px;top:358px;width:20px;height:1121px;background:#f0f0f0;"></div>
<div style="position:absolute;left:533px;top:362px;width:19px;height:232px;background:#c8c8c8;border-radius:10px"></div>
<div style="position:absolute;left:38px;top:1484px;width:486px;height:20px;background:#ededed;"></div>
<div style="position:absolute;left:42px;top:1484px;width:120px;height:20px;background:#c8c8c8;border-radius:10px"></div>
<div style="position:absolute;left:36px;top:1504px;width:522px;height:80px;background:#f0f0f0;"></div>
<div style="position:absolute;left:36px;top:1505px;width:522px;height:80px;line-height:80px;font-size:23px;color:#000;font-weight:400;letter-spacing:2.2px;padding-left:2.2px;white-space:nowrap;text-align:center;">고객 수&nbsp; <b><span class="l">5000</span>명</b>&nbsp; <span class="l">|</span> 검색 수&nbsp; <b><span class="l">5000</span>명</b></div>
<div style="position:absolute;left:36px;top:1596px;width:522px;height:72px;background:#4a90e2;border-radius:9px"></div>
<svg style="position:absolute;left:222px;top:1613.5px" width="36" height="36" viewBox="0 0 24 24" ><path fill="#fff" d="M12 12c2.21 0 4-1.79 4-4s-1.79-4-4-4-4 1.79-4 4 1.79 4 4 4zm0 2c-2.67 0-8 1.34-8 4v2h16v-2c0-2.66-5.33-4-8-4z"/></svg>
<div style="position:absolute;left:260px;top:1597px;height:72px;line-height:72px;font-size:24px;color:#fff;font-weight:700;letter-spacing:2.2px;white-space:nowrap;">고객 추가</div>
<div style="position:absolute;left:576.5px;top:960.5px;width:7px;height:7px;background:#111;border-radius:50%"></div>
<div style="position:absolute;left:576.5px;top:972.5px;width:7px;height:7px;background:#111;border-radius:50%"></div>
<div style="position:absolute;left:576.5px;top:984.5px;width:7px;height:7px;background:#111;border-radius:50%"></div>
<div style="position:absolute;left:604px;top:302px;width:24px;height:24px;background:#ffb6c1;"></div>
<div style="position:absolute;left:640.2px;top:285px;height:60px;line-height:60px;font-size:24px;color:#000;font-weight:400;letter-spacing:3.8px;white-space:nowrap;">예약</div>
<div style="position:absolute;left:700px;top:302px;width:24px;height:24px;background:#d0f0c0;"></div>
<div style="position:absolute;left:737px;top:285px;height:60px;line-height:60px;font-size:24px;color:#000;font-weight:400;letter-spacing:3.5px;white-space:nowrap;">현금</div>
<div style="position:absolute;left:796px;top:302px;width:24px;height:24px;background:#add8e6;"></div>
<div style="position:absolute;left:832px;top:285px;height:60px;line-height:60px;font-size:24px;color:#000;font-weight:400;letter-spacing:3.5px;white-space:nowrap;">카드</div>
<div style="position:absolute;left:892px;top:302px;width:24px;height:24px;background:#ffdab9;"></div>
<div style="position:absolute;left:929px;top:285px;height:60px;line-height:60px;font-size:24px;color:#000;font-weight:400;letter-spacing:2.0px;white-space:nowrap;">이체 <span class="l">(</span></div>
<div style="position:absolute;left:1004px;top:302px;width:24px;height:24px;background:#fff;border:5px solid #a9a9a9"></div>
<div style="position:absolute;left:1040.5px;top:285px;height:60px;line-height:60px;font-size:24px;color:#000;font-weight:400;letter-spacing:3.5px;white-space:nowrap;">지정</div>
<div style="position:absolute;left:1100px;top:302px;width:24px;height:24px;background:#fbfbfb;border:5px solid #e6e6e6"></div>
<div style="position:absolute;left:1135px;top:285px;height:60px;line-height:60px;font-size:24px;color:#000;font-weight:400;letter-spacing:2.3px;white-space:nowrap;">배정 <span class="l">)</span></div>
<svg style="position:absolute;left:1528.500px;top:305.800px" width="11.600" height="16.600" viewBox="0 0 14 20" fill="none" stroke="#222" stroke-width="3.500"><path d="M11 2.500L3.500 10l7.500 7.500"/></svg>
<svg style="position:absolute;left:1906.500px;top:305.800px" width="11.600" height="16.600" viewBox="0 0 14 20" fill="none" stroke="#222" stroke-width="3.500"><path d="M3 2.500L10.500 10 3 17.500"/></svg>
<div style="position:absolute;left:1576.8px;top:286px;height:60px;line-height:60px;font-size:29px;color:#000;font-weight:700;letter-spacing:3.4px;white-space:nowrap;"><span class="lb">2025</span>년 <span class="lb">4</span>월 <span class="lb">26</span>일 <span class="lb">(</span>토<span class="lb">)</span></div>
<div style="position:absolute;left:2444px;top:284px;width:194px;height:60px;background:#2eb872;border-radius:10px"></div>
<svg style="position:absolute;left:2467.5625px;top:300.1541666666667px" width="24.4" height="27" viewBox="0 0 24.4 27"><path fill="#fff" fill-rule="evenodd" d="M5 0h2.600v2.600h9.200V0h2.600v2.600h2.500a2.500 2.500 0 0 1 2.500 2.500v19.400a2.500 2.500 0 0 1-2.500 2.500H2.500A2.500 2.500 0 0 1 0 24.500V5.100a2.500 2.500 0 0 1 2.500-2.500H5zM2.200 9v15.200a.6.600 0 0 0 .6.600h18.800a.6.600 0 0 0 .6-.6V9zM13.200 15.400h6.200v6.200h-6.200z"/></svg>
<div style="position:absolute;left:2508.7px;top:285px;height:60px;line-height:60px;font-size:24px;color:#fff;font-weight:700;letter-spacing:2.3px;white-space:nowrap;">일정 확인</div>
<div style="position:absolute;left:2650px;top:284px;width:194px;height:60px;background:#4a90e2;border-radius:10px"></div>
<svg style="position:absolute;left:2670.5px;top:298.5px" width="30.5" height="30.5" viewBox="0 0 24 24" ><path fill="#fff" d="M19,3H14V5H10V3H5A2,2 0 0,0 3,5V21A2,2 0 0,0 5,23H19A2,2 0 0,0 21,21V5A2,2 0 0,0 19,3M12,8A2.7,2.7 0 0,1 14.7,10.7A2.7,2.7 0 0,1 12,13.4A2.7,2.7 0 0,1 9.3,10.7A2.7,2.7 0 0,1 12,8M17.5,19.5H6.5V18C6.5,15.8 10.2,14.8 12,14.8C13.8,14.8 17.5,15.8 17.5,18V19.5M13,4.5H11V0.5H13V4.5Z"/></svg>
<div style="position:absolute;left:2714.4px;top:285px;height:60px;line-height:60px;font-size:24px;color:#fff;font-weight:700;letter-spacing:2.3px;white-space:nowrap;">직원 추가</div>
<div style="position:absolute;left:604px;top:356px;width:2240px;height:1220px;background:#fff;border:2px solid #c8c8c8"></div>
<div style="position:absolute;left:606px;top:358px;width:200px;height:68px;background:#f5f5f5;"></div>
<div style="position:absolute;left:806px;top:358px;width:2000px;height:68px;background:#e8e8e8;"></div>
<div style="position:absolute;left:806px;top:359px;width:200px;height:68px;line-height:68px;font-size:21.5px;color:#000;font-weight:700;letter-spacing:2.6px;padding-left:2.6px;white-space:nowrap;text-align:center;">김주원</div>
<div style="position:absolute;left:1006px;top:359px;width:200px;height:68px;line-height:68px;font-size:21.5px;color:#000;font-weight:700;letter-spacing:2.6px;padding-left:2.6px;white-space:nowrap;text-align:center;">김민지</div>
<div style="position:absolute;left:1206px;top:359px;width:200px;height:68px;line-height:68px;font-size:21.5px;color:#000;font-weight:700;letter-spacing:2.6px;padding-left:2.6px;white-space:nowrap;text-align:center;">김영진</div>
<div style="position:absolute;left:1406px;top:359px;width:200px;height:68px;line-height:68px;font-size:21.5px;color:#000;font-weight:700;letter-spacing:2.6px;padding-left:2.6px;white-space:nowrap;text-align:center;">김예원</div>
<div style="position:absolute;left:1606px;top:359px;width:200px;height:68px;line-height:68px;font-size:21.5px;color:#000;font-weight:700;letter-spacing:2.6px;padding-left:2.6px;white-space:nowrap;text-align:center;">김영진</div>
<div style="position:absolute;left:1806px;top:359px;width:200px;height:68px;line-height:68px;font-size:21.5px;color:#000;font-weight:700;letter-spacing:2.6px;padding-left:2.6px;white-space:nowrap;text-align:center;">이지우</div>
<div style="position:absolute;left:2006px;top:359px;width:200px;height:68px;line-height:68px;font-size:21.5px;color:#000;font-weight:700;letter-spacing:2.6px;padding-left:2.6px;white-space:nowrap;text-align:center;">이지후</div>
<div style="position:absolute;left:2206px;top:359px;width:200px;height:68px;line-height:68px;font-size:21.5px;color:#000;font-weight:700;letter-spacing:2.6px;padding-left:2.6px;white-space:nowrap;text-align:center;">황정순</div>
<div style="position:absolute;left:2406px;top:359px;width:200px;height:68px;line-height:68px;font-size:21.5px;color:#000;font-weight:700;letter-spacing:2.6px;padding-left:2.6px;white-space:nowrap;text-align:center;">김수진</div>
<div style="position:absolute;left:2606px;top:359px;width:200px;height:68px;line-height:68px;font-size:21.5px;color:#000;font-weight:700;letter-spacing:2.6px;padding-left:2.6px;white-space:nowrap;text-align:center;">강예원</div>
<div style="position:absolute;left:606px;top:426px;width:200px;height:1078px;background:#e8e8e8;"></div>
<div style="position:absolute;left:806px;top:426px;width:2000px;height:1078px;background:repeating-linear-gradient(to bottom,#f8f8f8 0,#f8f8f8 20px,#fff 20px,#fff 40px)"></div>
<div style="position:absolute;left:806px;top:483px;width:2000px;height:2px;background:#d4d4d4;"></div>
<div style="position:absolute;left:806px;top:543px;width:2000px;height:2px;background:#a2a2a2;"></div>
<div style="position:absolute;left:806px;top:603px;width:2000px;height:2px;background:#d4d4d4;"></div>
<div style="position:absolute;left:806px;top:663px;width:2000px;height:2px;background:#a2a2a2;"></div>
<div style="position:absolute;left:806px;top:723px;width:2000px;height:2px;background:#d4d4d4;"></div>
<div style="position:absolute;left:806px;top:783px;width:2000px;height:2px;background:#a2a2a2;"></div>
<div style="position:absolute;left:806px;top:843px;width:2000px;height:2px;background:#d4d4d4;"></div>
<div style="position:absolute;left:806px;top:903px;width:2000px;height:2px;background:#a2a2a2;"></div>
<div style="position:absolute;left:806px;top:963px;width:2000px;height:2px;background:#d4d4d4;"></div>
<div style="position:absolute;left:806px;top:1023px;width:2000px;height:2px;background:#a2a2a2;"></div>
<div style="position:absolute;left:806px;top:1083px;width:2000px;height:2px;background:#d4d4d4;"></div>
<div style="position:absolute;left:806px;top:1143px;width:2000px;height:2px;background:#a2a2a2;"></div>
<div style="position:absolute;left:806px;top:1203px;width:2000px;height:2px;background:#d4d4d4;"></div>
<div style="position:absolute;left:806px;top:1263px;width:2000px;height:2px;background:#a2a2a2;"></div>
<div style="position:absolute;left:806px;top:1323px;width:2000px;height:2px;background:#d4d4d4;"></div>
<div style="position:absolute;left:806px;top:1383px;width:2000px;height:2px;background:#a2a2a2;"></div>
<div style="position:absolute;left:806px;top:1443px;width:2000px;height:2px;background:#d4d4d4;"></div>
<div style="position:absolute;left:806px;top:1503px;width:2000px;height:2px;background:#a2a2a2;"></div>
<div style="position:absolute;left:1005px;top:426px;width:2px;height:1079px;background:#d2d2d2;"></div>
<div style="position:absolute;left:1205px;top:426px;width:2px;height:1079px;background:#d2d2d2;"></div>
<div style="position:absolute;left:1405px;top:426px;width:2px;height:1079px;background:#d2d2d2;"></div>
<div style="position:absolute;left:1605px;top:426px;width:2px;height:1079px;background:#d2d2d2;"></div>
<div style="position:absolute;left:1805px;top:426px;width:2px;height:1079px;background:#d2d2d2;"></div>
<div style="position:absolute;left:2005px;top:426px;width:2px;height:1079px;background:#d2d2d2;"></div>
<div style="position:absolute;left:2205px;top:426px;width:2px;height:1079px;background:#d2d2d2;"></div>
<div style="position:absolute;left:2405px;top:426px;width:2px;height:1079px;background:#d2d2d2;"></div>
<div style="position:absolute;left:2605px;top:426px;width:2px;height:1079px;background:#d2d2d2;"></div>
<div style="position:absolute;left:2805px;top:426px;width:2px;height:1079px;background:#d2d2d2;"></div>
<div style="position:absolute;left:635.3px;top:422px;height:40px;line-height:40px;font-size:20.5px;color:#000;font-weight:500;letter-spacing:2.9px;white-space:nowrap;-webkit-text-stroke:.35px #000">오전 <span class="lb">9:00</span></div>
<div style="position:absolute;left:635.3px;top:468px;height:40px;line-height:40px;font-size:20.5px;color:#000;font-weight:500;letter-spacing:2.9px;white-space:nowrap;-webkit-text-stroke:.35px #000">오전 <span class="lb">9:30</span></div>
<div style="position:absolute;left:606px;top:486px;width:24px;height:2px;background:#fff;"></div>
<div style="position:absolute;left:768px;top:486px;width:38px;height:2px;background:#fff;"></div>
<div style="position:absolute;left:635.3px;top:528px;height:40px;line-height:40px;font-size:20.5px;color:#000;font-weight:500;letter-spacing:2.9px;white-space:nowrap;-webkit-text-stroke:.35px #000">오전 <span class="lb">10:00</span></div>
<div style="position:absolute;left:606px;top:546px;width:24px;height:2px;background:#fff;"></div>
<div style="position:absolute;left:768px;top:546px;width:38px;height:2px;background:#fff;"></div>
<div style="position:absolute;left:635.3px;top:588px;height:40px;line-height:40px;font-size:20.5px;color:#000;font-weight:500;letter-spacing:2.9px;white-space:nowrap;-webkit-text-stroke:.35px #000">오전 <span class="lb">10:30</span></div>
<div style="position:absolute;left:606px;top:606px;width:24px;height:2px;background:#fff;"></div>
<div style="position:absolute;left:768px;top:606px;width:38px;height:2px;background:#fff;"></div>
<div style="position:absolute;left:635.3px;top:648px;height:40px;line-height:40px;font-size:20.5px;color:#000;font-weight:500;letter-spacing:2.9px;white-space:nowrap;-webkit-text-stroke:.35px #000">오전 <span class="lb">11:00</span></div>
<div style="position:absolute;left:606px;top:666px;width:24px;height:2px;background:#fff;"></div>
<div style="position:absolute;left:768px;top:666px;width:38px;height:2px;background:#fff;"></div>
<div style="position:absolute;left:635.3px;top:708px;height:40px;line-height:40px;font-size:20.5px;color:#000;font-weight:500;letter-spacing:2.9px;white-space:nowrap;-webkit-text-stroke:.35px #000">오전 <span class="lb">11:30</span></div>
<div style="position:absolute;left:606px;top:726px;width:24px;height:2px;background:#fff;"></div>
<div style="position:absolute;left:768px;top:726px;width:38px;height:2px;background:#fff;"></div>
<div style="position:absolute;left:635.3px;top:768px;height:40px;line-height:40px;font-size:20.5px;color:#000;font-weight:500;letter-spacing:2.9px;white-space:nowrap;-webkit-text-stroke:.35px #000">오후 <span class="lb">12:00</span></div>
<div style="position:absolute;left:606px;top:786px;width:24px;height:2px;background:#fff;"></div>
<div style="position:absolute;left:768px;top:786px;width:38px;height:2px;background:#fff;"></div>
<div style="position:absolute;left:635.3px;top:828px;height:40px;line-height:40px;font-size:20.5px;color:#000;font-weight:500;letter-spacing:2.9px;white-space:nowrap;-webkit-text-stroke:.35px #000">오후 <span class="lb">12:30</span></div>
<div style="position:absolute;left:606px;top:846px;width:24px;height:2px;background:#fff;"></div>
<div style="position:absolute;left:768px;top:846px;width:38px;height:2px;background:#fff;"></div>
<div style="position:absolute;left:635.3px;top:888px;height:40px;line-height:40px;font-size:20.5px;color:#000;font-weight:500;letter-spacing:2.9px;white-space:nowrap;-webkit-text-stroke:.35px #000">오후 <span class="lb">1:00</span></div>
<div style="position:absolute;left:606px;top:906px;width:24px;height:2px;background:#fff;"></div>
<div style="position:absolute;left:768px;top:906px;width:38px;height:2px;background:#fff;"></div>
<div style="position:absolute;left:635.3px;top:948px;height:40px;line-height:40px;font-size:20.5px;color:#000;font-weight:500;letter-spacing:2.9px;white-space:nowrap;-webkit-text-stroke:.35px #000">오후 <span class="lb">1:30</span></div>
<div style="position:absolute;left:606px;top:966px;width:24px;height:2px;background:#fff;"></div>
<div style="position:absolute;left:768px;top:966px;width:38px;height:2px;background:#fff;"></div>
<div style="position:absolute;left:635.3px;top:1008px;height:40px;line-height:40px;font-size:20.5px;color:#000;font-weight:500;letter-spacing:2.9px;white-space:nowrap;-webkit-text-stroke:.35px #000">오후 <span class="lb">2:00</span></div>
<div style="position:absolute;left:606px;top:1026px;width:24px;height:2px;background:#fff;"></div>
<div style="position:absolute;left:768px;top:1026px;width:38px;height:2px;background:#fff;"></div>
<div style="position:absolute;left:635.3px;top:1068px;height:40px;line-height:40px;font-size:20.5px;color:#000;font-weight:500;letter-spacing:2.9px;white-space:nowrap;-webkit-text-stroke:.35px #000">오후 <span class="lb">2:30</span></div>
<div style="position:absolute;left:606px;top:1086px;width:24px;height:2px;background:#fff;"></div>
<div style="position:absolute;left:768px;top:1086px;width:38px;height:2px;background:#fff;"></div>
<div style="position:absolute;left:635.3px;top:1128px;height:40px;line-height:40px;font-size:20.5px;color:#000;font-weight:500;letter-spacing:2.9px;white-space:nowrap;-webkit-text-stroke:.35px #000">오후 <span class="lb">3:00</span></div>
<div style="position:absolute;left:606px;top:1146px;width:24px;height:2px;background:#fff;"></div>
<div style="position:absolute;left:768px;top:1146px;width:38px;height:2px;background:#fff;"></div>
<div style="position:absolute;left:635.3px;top:1188px;height:40px;line-height:40px;font-size:20.5px;color:#000;font-weight:500;letter-spacing:2.9px;white-space:nowrap;-webkit-text-stroke:.35px #000">오후 <span class="lb">3:30</span></div>
<div style="position:absolute;left:606px;top:1206px;width:24px;height:2px;background:#fff;"></div>
<div style="position:absolute;left:768px;top:1206px;width:38px;height:2px;background:#fff;"></div>
<div style="position:absolute;left:635.3px;top:1248px;height:40px;line-height:40px;font-size:20.5px;color:#000;font-weight:500;letter-spacing:2.9px;white-space:nowrap;-webkit-text-stroke:.35px #000">오후 <span class="lb">4:00</span></div>
<div style="position:absolute;left:606px;top:1266px;width:24px;height:2px;background:#fff;"></div>
<div style="position:absolute;left:768px;top:1266px;width:38px;height:2px;background:#fff;"></div>
<div style="position:absolute;left:635.3px;top:1308px;height:40px;line-height:40px;font-size:20.5px;color:#000;font-weight:500;letter-spacing:2.9px;white-space:nowrap;-webkit-text-stroke:.35px #000">오후 <span class="lb">4:30</span></div>
<div style="position:absolute;left:606px;top:1326px;width:24px;height:2px;background:#fff;"></div>
<div style="position:absolute;left:768px;top:1326px;width:38px;height:2px;background:#fff;"></div>
<div style="position:absolute;left:635.3px;top:1368px;height:40px;line-height:40px;font-size:20.5px;color:#000;font-weight:500;letter-spacing:2.9px;white-space:nowrap;-webkit-text-stroke:.35px #000">오후 <span class="lb">5:00</span></div>
<div style="position:absolute;left:606px;top:1386px;width:24px;height:2px;background:#fff;"></div>
<div style="position:absolute;left:768px;top:1386px;width:38px;height:2px;background:#fff;"></div>
<div style="position:absolute;left:635.3px;top:1428px;height:40px;line-height:40px;font-size:20.5px;color:#000;font-weight:500;letter-spacing:2.9px;white-space:nowrap;-webkit-text-stroke:.35px #000">오후 <span class="lb">5:30</span></div>
<div style="position:absolute;left:606px;top:1446px;width:24px;height:2px;background:#fff;"></div>
<div style="position:absolute;left:768px;top:1446px;width:38px;height:2px;background:#fff;"></div>
<div style="position:absolute;left:635.3px;top:1472px;height:40px;line-height:40px;font-size:20.5px;color:#000;font-weight:500;letter-spacing:2.9px;white-space:nowrap;-webkit-text-stroke:.35px #000">오후 <span class="lb">6:00</span></div>
<div class="ev" style="left:807px;top:506px;width:198px;height:178px;border-color:#999;background:#fdece0"><i class="d"></i>오전 <span class="l">9:40</span><br><i class="d"></i>서비스 <span class="l">3</span><br><i class="d"></i>조현우<br><i class="d"></i><span class="l">10,120</span>원</div>
<div class="ev" style="left:807px;top:986px;width:198px;height:178px;border-color:#add8e6;background:#d8ecf3"><i class="d"></i>오후 <span class="l">1:40</span><br><i class="d"></i>서비스 <span class="l">2</span><br><i class="d"></i>김영수<br><i class="d"></i><span class="l">12,950</span>원</div>
<div class="ev" style="left:807px;top:1246px;width:198px;height:58px;border-color:#ffdab9;background:#fdece0"><i class="d"></i>오후 <span class="l">3:50</span></div>
<div class="ev" style="left:1207px;top:1306px;width:198px;height:118px;border-color:#999;background:#fdece0"><i class="d"></i>오후 <span class="l">4:20</span><br><i class="d"></i>서비스 <span class="l">7</span><br><i class="d"></i>권경수</div>
<div class="ev" style="left:1407px;top:446px;width:198px;height:118px;border-color:#999;background:#d8ecf3"><i class="d"></i>오전 <span class="l">9:10</span><br><i class="d"></i>서비스 <span class="l">1</span><br><i class="d"></i>이민호</div>
<div class="ev" style="left:1807px;top:866px;width:198px;height:118px;border-color:#999;background:#d8ecf3"><i class="d"></i>오후 <span class="l">12:40</span><br><i class="d"></i>서비스 <span class="l">4</span><br><i class="d"></i>정하늘</div>
<div class="ev" style="left:2007px;top:846px;width:198px;height:118px;border-color:#999;background:#d8ecf3"><i class="d"></i>오후 <span class="l">12:30</span><br><i class="d"></i>서비스 <span class="l">8</span><br><i class="d"></i>김준영</div>
<div class="ev" style="left:2007px;top:1206px;width:198px;height:178px;border-color:#ffdab9;background:#fdece0"><i class="d"></i>오후 <span class="l">3:30</span><br><i class="d"></i>서비스 <span class="l">8</span><br><i class="d"></i>임정호<br><i class="d"></i><span class="l">25,624</span>원</div>
<div class="ev" style="left:2207px;top:1306px;width:198px;height:58px;border-color:#d0f0c0;background:#e7f6e0"><i class="d"></i>오후 <span class="l">4:20</span></div>
<div class="ev" style="left:2407px;top:726px;width:198px;height:178px;border-color:#999;background:#d8ecf3"><i class="d"></i>오전 <span class="l">11:30</span><br><i class="d"></i>서비스 <span class="l">7</span><br><i class="d"></i>김지민<br><i class="d"></i><span class="l">14,885</span>원</div>
<div class="ev" style="left:2407px;top:1046px;width:198px;height:58px;border-color:#ffdab9;background:#fdece0"><i class="d"></i>오후 <span class="l">2:10</span></div>
<div class="ev" style="left:2407px;top:1286px;width:198px;height:118px;border-color:#999;background:#e7f6e0"><i class="d"></i>오후 <span class="l">4:10</span><br><i class="d"></i>서비스 <span class="l">6</span><br><i class="d"></i>김서영</div>
<div class="ev" style="left:2607px;top:626px;width:198px;height:178px;border-color:#d0f0c0;background:#e7f6e0"><i class="d"></i>오전 <span class="l">10:40</span><br><i class="d"></i>서비스 <span class="l">5</span><br><i class="d"></i>구지우<br><i class="d"></i><span class="l">11,820</span>원</div>
<div class="ev" style="left:2607px;top:1066px;width:198px;height:178px;border-color:#ffdab9;background:#fdece0"><i class="d"></i>오후 <span class="l">2:20</span><br><i class="d"></i>서비스 <span class="l">8</span><br><i class="d"></i>박상철<br><i class="d"></i><span class="l">13,799</span>원</div>
<div style="position:absolute;left:1600px;top:1588px;width:250px;height:80px;background:#fff;border:4px solid #4a90e2;border-radius:12px"></div>
<div style="position:absolute;left:1628px;top:1616px;width:24px;height:24px;background:#4a90e2;border-radius:2px"></div>
<svg style="position:absolute;left:1628px;top:1616px" width="24" height="24" viewBox="0 0 24 24" fill="none" stroke="#fff" stroke-width="2.600"><path d="M6 15l6-6 6 6"/></svg>
<div style="position:absolute;left:1660px;top:1589px;height:80px;line-height:80px;font-size:24px;color:#000;font-weight:700;letter-spacing:2.3px;white-space:nowrap;">요약 정보 열기</div>
<div style="position:absolute;left:880px;top:463.5px;width:1120px;height:768px;border-radius:15px;background:#fff;box-shadow:0 0 0 1.200px rgba(105,105,105,.62),0 64px 92px -14px rgba(0,0,0,.34),0 4px 36px rgba(0,0,0,.10)"></div>
<div style="position:absolute;left:880px;top:463.5px;width:1120px;height:56.5px;background:#ebf4f8;border-radius:15px 15px 0 0"></div>
<svg style="position:absolute;left:899.5px;top:480.5px" width="21.5" height="21.5" viewBox="0 0 22 22"><circle cx="6.300" cy="2.100" r="1.700" fill="#111"/><circle cx="11.700" cy="2.400" r="1.400" fill="#111"/><circle cx="18.800" cy="11.300" r="3.300" fill="#f9421e"/><circle cx="19.300" cy="11.200" r="1.200" fill="#ebf4f8"/><path fill="#f9421e" d="M1.200 6.200h16a1 1 0 0 1 1 1.200l-2.300 12.600a2.200 2.200 0 0 1-2.200 1.800h-8.200a2.200 2.200 0 0 1-2.200-1.800l-3.100-12.600a1 1 0 0 1 1-1.200z"/><text x="8.800" y="17.400" font-size="10.500" font-weight="700" fill="#fff" text-anchor="middle" font-family="Liberation Sans,sans-serif" style="letter-spacing:0">C</text></svg>
<div style="position:absolute;left:935px;top:464px;height:57px;line-height:57px;font-size:24px;color:#000;font-weight:400;letter-spacing:1.8px;white-space:nowrap;">고객 추가</div>
<svg style="position:absolute;left:1956px;top:480px" width="22" height="22" viewBox="0 0 22 22" fill="none" stroke="#111" stroke-width="2"><path d="M1.500 1.500l19 19M20.500 1.500l-19 19"/></svg>
<div class="lab" style="top:542px;height:60px;line-height:62px">이름</div>
<div class="inp" style="top:542px;height:60px"></div>
<div class="lab" style="top:614px;height:60px;line-height:62px">전화번호</div>
<div class="inp" style="top:614px;height:60px"></div>
<div class="lab" style="top:686px;height:68px;line-height:70px">고객 분류</div>
<div class="inp" style="top:686px;height:68px"></div>
<div class="lab" style="top:766px;height:68px;line-height:70px">문자 수신 여부</div>
<div class="inp" style="top:766px;height:68px"></div>
<div class="lab" style="top:846px;height:68px;line-height:70px">성별</div>
<div class="inp" style="top:846px;height:68px"></div>
<div class="lab" style="top:926px;height:68px;line-height:70px">고객 등급</div>
<div class="inp" style="top:926px;height:68px"></div>
<div class="lab" style="top:1006px;height:120px;line-height:122px">메모</div>
<div class="inp" style="top:1006px;height:120px"></div>
<div style="position:absolute;left:1170px;top:556px;width:2px;height:32px;background:#000;"></div>
<div class="rd on" style="left:1174.8px;top:707.0px"></div>
<div style="position:absolute;left:1216px;top:687px;height:68px;line-height:68px;font-size:24px;color:#000;font-weight:400;letter-spacing:2.5px;white-space:nowrap;">일반</div>
<div class="rd" style="left:1441.5px;top:707.0px"></div>
<div style="position:absolute;left:1483px;top:687px;height:68px;line-height:68px;font-size:24px;color:#000;font-weight:400;letter-spacing:2.5px;white-space:nowrap;">주의</div>
<div class="rd" style="left:1708.1px;top:707.0px"></div>
<div style="position:absolute;left:1750px;top:687px;height:68px;line-height:68px;font-size:24px;color:#000;font-weight:400;letter-spacing:2.5px;white-space:nowrap;">제한</div>
<div class="rd on" style="left:1174.8px;top:787.0px"></div>
<div style="position:absolute;left:1216px;top:767px;height:68px;line-height:68px;font-size:24px;color:#000;font-weight:400;letter-spacing:2.5px;white-space:nowrap;">수신</div>
<div class="rd" style="left:1574.8px;top:787.0px"></div>
<div style="position:absolute;left:1616px;top:767px;height:68px;line-height:68px;font-size:24px;color:#000;font-weight:400;letter-spacing:2.5px;white-space:nowrap;">거부</div>
<div class="rd" style="left:1174.8px;top:867.0px"></div>
<div style="position:absolute;left:1216px;top:847px;height:68px;line-height:68px;font-size:24px;color:#000;font-weight:400;letter-spacing:2.5px;white-space:nowrap;">남성</div>
<div class="rd" style="left:1441.5px;top:867.0px"></div>
<div style="position:absolute;left:1483px;top:847px;height:68px;line-height:68px;font-size:24px;color:#000;font-weight:400;letter-spacing:2.5px;white-space:nowrap;">여성</div>
<div class="rd on" style="left:1708.1px;top:867.0px"></div>
<div style="position:absolute;left:1750px;top:847px;height:68px;line-height:68px;font-size:24px;color:#000;font-weight:400;letter-spacing:2.5px;white-space:nowrap;">미선택</div>
<div class="rd" style="left:1174.8px;top:947.0px"></div>
<div style="position:absolute;left:1216px;top:927px;height:68px;line-height:68px;font-size:24px;color:#000;font-weight:400;letter-spacing:2.5px;white-space:nowrap;"><span class="l">VIP</span></div>
<div class="rd" style="left:1374.8px;top:947.0px"></div>
<div style="position:absolute;left:1416px;top:927px;height:68px;line-height:68px;font-size:24px;color:#000;font-weight:400;letter-spacing:2.5px;white-space:nowrap;">단골</div>
<div class="rd" style="left:1574.8px;top:947.0px"></div>
<div style="position:absolute;left:1616px;top:927px;height:68px;line-height:68px;font-size:24px;color:#000;font-weight:400;letter-spacing:2.5px;white-space:nowrap;">일반</div>
<div class="rd on" style="left:1774.8px;top:947.0px"></div>
<div style="position:absolute;left:1816px;top:927px;height:68px;line-height:68px;font-size:24px;color:#000;font-weight:400;letter-spacing:2.5px;white-space:nowrap;">신규</div>
<div style="position:absolute;left:1630px;top:1138px;width:168px;height:72px;background:#4a90e2;border-radius:12px"></div>
<div style="position:absolute;left:1630px;top:1140px;width:168px;height:72px;line-height:72px;font-size:24px;color:#fff;font-weight:700;letter-spacing:3px;padding-left:3px;white-space:nowrap;text-align:center;">확인</div>
<div style="position:absolute;left:1810px;top:1138px;width:168px;height:72px;background:#aaa;border-radius:12px"></div>
<div style="position:absolute;left:1810px;top:1140px;width:168px;height:72px;line-height:72px;font-size:24px;color:#fff;font-weight:700;letter-spacing:3px;padding-left:3px;white-space:nowrap;text-align:center;">취소</div>
</div></body></html>
